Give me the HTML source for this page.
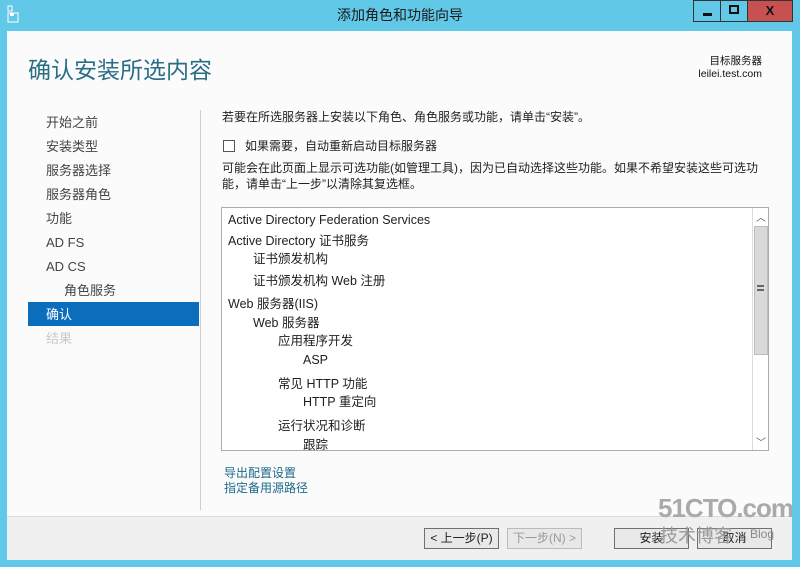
<!DOCTYPE html>
<html><head><meta charset="utf-8"><style>
*{margin:0;padding:0;box-sizing:border-box}
body{width:800px;height:567px;background:#62c8e8;font-family:"Liberation Sans","Noto Sans CJK SC",sans-serif;position:relative;overflow:hidden;color:#1e1e1e}
.a{position:absolute;white-space:nowrap}
#title{left:0;top:0;width:800px;height:31px;text-align:center;line-height:31px;font-size:14px;color:#1a1a1a}
#win{left:7px;top:31px;width:785px;height:529px;background:#fbfbfb}
.nav{font-size:13px;color:#444;left:46px;line-height:16px;height:16px}
.btn{position:absolute;height:21px;border:1px solid #707070;background:#e8e8e8;font-size:12px;line-height:19px;text-align:center}
.t{font-size:12px;color:#1e1e1e;line-height:15px}
.li{font-size:12.5px;color:#1e1e1e;line-height:15px}
</style></head><body>
<div class="a" id="title">添加角色和功能向导</div>
<svg class="a" style="left:7px;top:5px" width="12" height="18"><rect x="1" y="1" width="4" height="5" fill="none" stroke="#fff"/><rect x="1" y="8" width="10" height="9" fill="none" stroke="#fff"/><rect x="3" y="8" width="4" height="3" fill="#fff"/></svg>
<div class="a" style="left:693px;top:0;width:28px;height:22px;border:1px solid #333;background:#62c8e8"><div class="a" style="left:9px;top:12px;width:9px;height:3px;background:#111"></div></div>
<div class="a" style="left:720px;top:0;width:28px;height:22px;border:1px solid #333;background:#62c8e8"><div class="a" style="left:8px;top:4px;width:10px;height:9px;border:2px solid #111"></div></div>
<div class="a" style="left:747px;top:0;width:46px;height:22px;border:1px solid #333;background:#c75050;color:#111;font-weight:bold;font-size:13px;text-align:center;line-height:20px">X</div>
<div class="a" id="win"></div>
<div class="a" style="left:28px;top:55px;font-size:23px;color:#2a6e86;line-height:30px">确认安装所选内容</div>
<div class="a" style="right:38px;top:55px;font-size:10.5px;color:#111;line-height:13px;text-align:right">目标服务器<br>leilei.test.com</div>
<div class="a" style="left:200px;top:110px;width:1px;height:400px;background:#cfcfcf"></div>
<div class="a nav" style="top:115px">开始之前</div>
<div class="a nav" style="top:139px">安装类型</div>
<div class="a nav" style="top:163px">服务器选择</div>
<div class="a nav" style="top:187px">服务器角色</div>
<div class="a nav" style="top:211px">功能</div>
<div class="a nav" style="top:235px">AD FS</div>
<div class="a nav" style="top:259px">AD CS</div>
<div class="a nav" style="top:283px;left:64px">角色服务</div>
<div class="a" style="left:28px;top:302px;width:171px;height:24px;background:#0a6ebd"></div>
<div class="a nav" style="top:307px;color:#fff">确认</div>
<div class="a nav" style="top:331px;color:#c8c8c8">结果</div>
<div class="a t" style="left:222px;top:110px">若要在所选服务器上安装以下角色、角色服务或功能，请单击“安装”。</div>
<div class="a" style="left:223px;top:140px;width:12px;height:12px;border:1px solid #555;background:#fff"></div>
<div class="a t" style="left:245px;top:139px">如果需要，自动重新启动目标服务器</div>
<div class="a t" style="left:222px;top:161px">可能会在此页面上显示可选功能(如管理工具)，因为已自动选择这些功能。如果不希望安装这些可选功</div>
<div class="a t" style="left:222px;top:177px">能，请单击“上一步”以清除其复选框。</div>
<div class="a" style="left:221px;top:207px;width:548px;height:244px;border:1px solid #acacac;background:#fff;overflow:hidden">
<div class="a li" style="left:6px;top:5px">Active Directory Federation Services</div>
<div class="a li" style="left:6px;top:26px">Active Directory 证书服务</div>
<div class="a li" style="left:31px;top:44px">证书颁发机构</div>
<div class="a li" style="left:31px;top:66px">证书颁发机构 Web 注册</div>
<div class="a li" style="left:6px;top:89px">Web 服务器(IIS)</div>
<div class="a li" style="left:31px;top:108px">Web 服务器</div>
<div class="a li" style="left:56px;top:126px">应用程序开发</div>
<div class="a li" style="left:81px;top:145px">ASP</div>
<div class="a li" style="left:56px;top:169px">常见 HTTP 功能</div>
<div class="a li" style="left:81px;top:187px">HTTP 重定向</div>
<div class="a li" style="left:56px;top:211px">运行状况和诊断</div>
<div class="a li" style="left:81px;top:230px">跟踪</div>
<div class="a" style="left:530px;top:0;width:17px;height:242px;border-left:1px solid #dcdcdc;background:#fff">
<div class="a" style="left:3px;top:1px;font-size:10px;color:#555">︿</div>
<div class="a" style="left:1px;top:18px;width:14px;height:129px;background:#d9d9d9;border:1px solid #bcbcbc"></div>
<div class="a" style="left:4px;top:77px;width:7px;height:6px;border-top:2px solid #666;border-bottom:2px solid #666"></div>
<div class="a" style="left:3px;top:226px;font-size:10px;color:#555">﹀</div>
</div></div>
<div class="a" style="left:224px;top:466px;font-size:12px;color:#1a6a8a;line-height:15px">导出配置设置</div>
<div class="a" style="left:224px;top:481px;font-size:12px;color:#1a6a8a;line-height:15px">指定备用源路径</div>
<div class="a" style="left:7px;top:516px;width:785px;height:44px;background:#f0f0f0;border-top:1px solid #dcdcdc"></div>
<div class="btn" style="left:424px;top:528px;width:75px">&lt; 上一步(P)</div>
<div class="btn" style="left:507px;top:528px;width:75px;color:#999;border-color:#bbb">下一步(N) &gt;</div>
<div class="btn" style="left:614px;top:528px;width:75px">安装</div>
<div class="btn" style="left:697px;top:528px;width:75px">取消</div>
<div class="a" style="left:658px;top:493px;font-size:26px;font-weight:bold;color:#aaa;letter-spacing:-1px;line-height:30px">51CTO.com</div>
<div class="a" style="left:660px;top:525px;font-size:18px;color:#999;line-height:22px">技术博客</div>
<div class="a" style="left:750px;top:527px;font-size:12px;color:#888;line-height:15px">Blog</div>
</body></html>
